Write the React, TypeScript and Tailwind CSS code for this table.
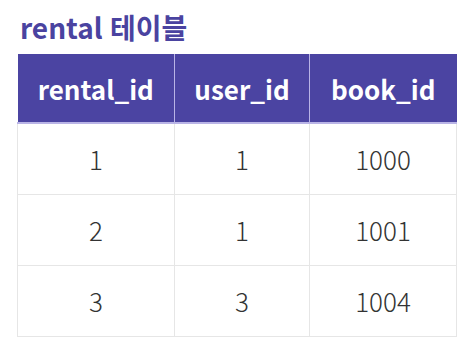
const rows = [
  ["1", "1", "1000"],
  ["2", "1", "1001"],
  ["3", "3", "1004"],
];

export default function App() {
  return (
    <div className="w-[470px] h-[352px] bg-white pl-[17px] pt-[8px] font-['Malgun_Gothic','Noto_Sans_CJK_KR',sans-serif]">
      <h2 className="pl-[3px] text-[28px] font-bold leading-[39px] text-[#4a43a0] [word-spacing:1px]">rental 테이블</h2>
      <table className="mt-[7px] w-[440px] border-collapse">
        <thead>
          <tr className="h-[69px] bg-[#4b44a2] text-white">
            <th className="w-[157px] border-r border-b-2 border-[#b9b4e6] text-[26px] font-bold">rental_id</th>
            <th className="w-[135px] border-r border-b-2 border-[#b9b4e6] text-[26px] font-bold">user_id</th>
            <th className="border-b-2 border-[#b9b4e6] text-[26px] font-bold">book_id</th>
          </tr>
        </thead>
        <tbody>
          {rows.map((r, i) => (
            <tr key={i} className="h-[71px]">
              {r.map((c, j) => (
                <td key={j} className="border border-[#e6e6e6] text-center text-[26px] font-light text-[#333]">
                  {c}
                </td>
              ))}
            </tr>
          ))}
        </tbody>
      </table>
    </div>
  );
}
